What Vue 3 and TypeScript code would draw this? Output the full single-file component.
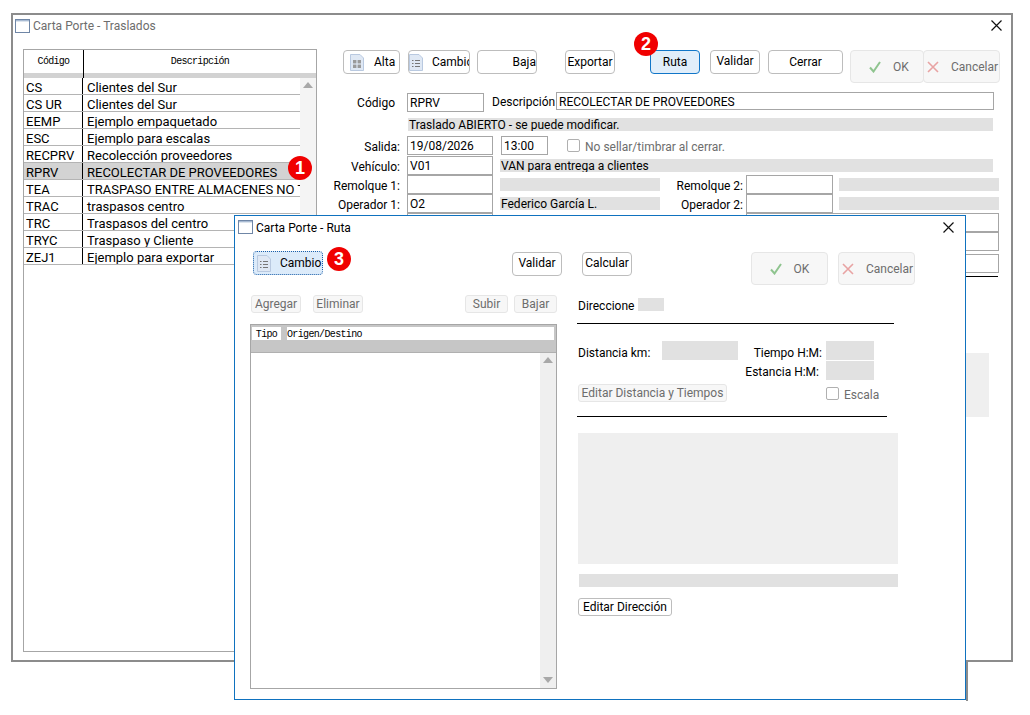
<script setup lang="ts">
interface Row { code: string; desc: string; selected?: boolean }
const rows: Row[] = [
  { code: 'CS', desc: 'Clientes del Sur' },
  { code: 'CS UR', desc: 'Clientes del Sur' },
  { code: 'EEMP', desc: 'Ejemplo empaquetado' },
  { code: 'ESC', desc: 'Ejemplo para escalas' },
  { code: 'RECPRV', desc: 'Recolección proveedores' },
  { code: 'RPRV', desc: 'RECOLECTAR DE PROVEEDORES', selected: true },
  { code: 'TEA', desc: 'TRASPASO ENTRE ALMACENES NO T' },
  { code: 'TRAC', desc: 'traspasos centro' },
  { code: 'TRC', desc: 'Traspasos del centro' },
  { code: 'TRYC', desc: 'Traspaso y Cliente' },
  { code: 'ZEJ1', desc: 'Ejemplo para exportar' },
]
</script>

<template>
  <div class="desk">
    <section class="win main">
      <header class="title inactive">
        <svg class="winicon" width="15" height="14" viewBox="0 0 15 14"><rect x="0.5" y="0.5" width="14" height="13" fill="#fff" stroke="#6f86a6" /><rect x="1" y="1" width="13" height="1.4" fill="#a9bbd3" /></svg>
        <span>Carta Porte - Traslados</span>
        <svg class="close" width="11" height="11" viewBox="0 0 11 11"><path d="M0.5 0.5 10.5 10.5M10.5 0.5 0.5 10.5" stroke="#111" stroke-width="1.2" fill="none" /></svg>
      </header>
      <div class="main-body">
        <div class="list">
          <div class="list-head">
            <div class="h1">Código</div>
            <div class="h2">Descripción</div>
          </div>
          <div class="list-band"><i></i></div>
          <div class="list-rows">
            <div class="rows-col">
              <div v-for="r in rows" :key="r.code" class="lrow" :class="{ sel: r.selected }">
                <span class="c1">{{ r.code }}</span>
                <span class="c2">{{ r.desc }}</span>
              </div>
            </div>
            <div class="vscroll soft"><b class="up"></b></div>
          </div>
        </div>

        <div class="pane">
          <div class="tb">
            <button class="btn b-alta">
              <svg class="doc" width="14" height="17" viewBox="0 0 14 17"><path d="M0.5 0.5H10L13.5 4V16.5H0.5Z" fill="#dfe8f4" stroke="#b9c9e0" /><rect x="3" y="6" width="3.4" height="3.4" fill="#9a9a9a" /><rect x="7.6" y="6" width="3.4" height="3.4" fill="#9a9a9a" /><rect x="3" y="10.6" width="3.4" height="3.4" fill="#9a9a9a" /><rect x="7.6" y="10.6" width="3.4" height="3.4" fill="#9a9a9a" /></svg>
              <span class="tx">Alta</span>
            </button>
            <button class="btn b-cambio">
              <svg class="doc" width="14" height="17" viewBox="0 0 14 17"><path d="M0.5 0.5H10L13.5 4V16.5H0.5Z" fill="#dfe8f4" stroke="#b9c9e0" /><path d="M3 6.5H4.5M6 6.5H11M3 9.5H4.5M6 9.5H11M3 12.5H4.5M6 12.5H11" stroke="#777" /></svg>
              <span class="tx">Cambio</span>
            </button>
            <button class="btn b-baja"><span class="tx">Baja</span></button>
            <button class="btn b-exp">Exportar</button>
            <button class="btn b-ruta">Ruta</button>
            <button class="btn b-val">Validar</button>
            <button class="btn b-cerrar">Cerrar</button>
            <button class="btn off big b-ok">
              <svg width="12" height="12" viewBox="0 0 12 12"><path d="M1 6.5 4.5 10.5 11 1" stroke="#8fc48f" stroke-width="2" fill="none" /></svg>
              <span>OK</span>
            </button>
            <button class="btn off big b-can">
              <svg width="12" height="12" viewBox="0 0 12 12"><path d="M1 1 11 11M11 1 1 11" stroke="#e8a3a3" stroke-width="1.6" fill="none" /></svg>
              <span>Cancelar</span>
            </button>
          </div>

          <div class="frow r-codigo">
            <label class="lab l-cod">Código</label>
            <div class="inp i-cod">RPRV</div>
            <label class="l-desc">Descripción</label>
            <div class="inp i-desc">RECOLECTAR DE PROVEEDORES</div>
          </div>
          <div class="frow r-status"><div class="ro status">Traslado ABIERTO - se puede modificar.</div></div>
          <div class="frow r-salida">
            <label class="lab">Salida:</label>
            <div class="inp i-std">19/08/2026</div>
            <div class="inp i-time">13:00</div>
            <span class="chk c-sellar"></span>
            <span class="dim">No sellar/timbrar al cerrar.</span>
          </div>
          <div class="frow stack">
            <label class="lab">Vehículo:</label>
            <div class="inp i-std">V01</div>
            <div class="ro ro-veh">VAN para entrega a clientes</div>
          </div>
          <div class="frow stack">
            <label class="lab">Remolque 1:</label>
            <div class="inp i-std"></div>
            <div class="ro ro-half"></div>
            <label class="lab2">Remolque 2:</label>
            <div class="inp i-std i-r"></div>
            <div class="ro ro-r"></div>
          </div>
          <div class="frow stack">
            <label class="lab">Operador 1:</label>
            <div class="inp i-std">O2</div>
            <div class="ro ro-half">Federico García L.</div>
            <label class="lab2">Operador 2:</label>
            <div class="inp i-std i-r"></div>
            <div class="ro ro-r"></div>
          </div>
          <div class="frow stack">
            <span class="lab"></span>
            <div class="inp i-std"></div>
            <div class="inp i-long"></div>
          </div>
          <div class="frow stack"><div class="inp i-wide"></div></div>
          <div class="frow stack r-last"><div class="inp i-wide"></div></div>
          <div class="pane-line"></div>
          <div class="pane-block"></div>
        </div>
      </div>
    </section>

    <span class="badge b1">1</span>
    <span class="badge b2">2</span>

    <div class="corner-shadow"></div>

    <section class="win modal">
      <header class="title">
        <svg class="winicon" width="15" height="14" viewBox="0 0 15 14"><rect x="0.5" y="0.5" width="14" height="13" fill="#fff" stroke="#6f86a6" /><rect x="1" y="1" width="13" height="1.4" fill="#a9bbd3" /></svg>
        <span class="m-title">Carta Porte - Ruta</span>
        <svg class="close" width="11" height="11" viewBox="0 0 11 11"><path d="M0.5 0.5 10.5 10.5M10.5 0.5 0.5 10.5" stroke="#111" stroke-width="1.2" fill="none" /></svg>
      </header>
      <div class="m-tb">
        <button class="btn m-cambio">
          <svg class="doc" width="14" height="17" viewBox="0 0 14 17"><path d="M0.5 0.5H10L13.5 4V16.5H0.5Z" fill="#dfe8f4" stroke="#b9c9e0" /><path d="M3 6.5H4.5M6 6.5H11M3 9.5H4.5M6 9.5H11M3 12.5H4.5M6 12.5H11" stroke="#777" /></svg>
          <span class="tx">Cambio</span>
        </button>
        <button class="btn m-val">Validar</button>
        <button class="btn m-calc">Calcular</button>
        <button class="btn off big m-ok">
          <svg width="12" height="12" viewBox="0 0 12 12"><path d="M1 6.5 4.5 10.5 11 1" stroke="#8fc48f" stroke-width="2" fill="none" /></svg>
          <span>OK</span>
        </button>
        <button class="btn off big m-can">
          <svg width="12" height="12" viewBox="0 0 12 12"><path d="M1 1 11 11M11 1 1 11" stroke="#e8a3a3" stroke-width="1.6" fill="none" /></svg>
          <span>Cancelar</span>
        </button>
      </div>
      <div class="m-body">
        <div class="m-left">
          <div class="m-acts">
            <button class="btn off sm a-add">Agregar</button>
            <button class="btn off sm a-del">Eliminar</button>
            <button class="btn off sm a-up">Subir</button>
            <button class="btn off sm a-down">Bajar</button>
          </div>
          <div class="m-grid">
            <div class="g-head">
              <div class="g-h1">Tipo</div>
              <div class="g-h2">Origen/Destino</div>
            </div>
            <div class="g-band"></div>
            <div class="g-rows">
              <div class="vscroll"><b class="up"></b><b class="down"></b></div>
            </div>
          </div>
        </div>
        <div class="m-right">
          <div class="d-row">
            <span class="d-lab">Direccione</span>
            <div class="ro d-val"></div>
          </div>
          <div class="rule r1"></div>
          <div class="t-row t1">
            <span class="t-lab">Distancia km:</span>
            <div class="ro t-km"></div>
            <span class="t-tlab">Tiempo H:M:</span>
            <div class="ro t-hm"></div>
          </div>
          <div class="t-row t2">
            <span class="t-elab">Estancia H:M:</span>
            <div class="ro t-hm t-hm2"></div>
          </div>
          <div class="e-row">
            <button class="btn off sm e-btn">Editar Distancia y Tiempos</button>
            <span class="chk c-esc"></span>
            <span class="dim">Escala</span>
          </div>
          <div class="rule r2"></div>
          <div class="map"></div>
          <div class="ro addr"></div>
          <button class="btn sm e-dir">Editar Dirección</button>
        </div>
      </div>
    </section>

    <span class="badge b3">3</span>
  </div>
</template>

<style>
html, body { margin: 0; background: #fff; }
</style>

<style scoped>
.desk {
  position: relative;
  width: 1030px;
  height: 715px;
  overflow: hidden;
  background: #fff;
  color: #000;
  font-family: Roboto, "Noto Sans", sans-serif;
  font-size: 12px;
  line-height: 16px;
}
button { font: inherit; color: inherit; padding: 0; }
svg { flex: none; }
.win { position: absolute; box-sizing: border-box; background: #fff; display: flex; flex-direction: column; }
.main { left: 11px; top: 13px; width: 1002px; height: 649px; border: 2px solid #8c8c8c; }
.modal { left: 234px; top: 215px; width: 732px; height: 485px; border: 1px solid #0f72bf; }
.corner-shadow { position: absolute; left: 966px; top: 661px; width: 2px; height: 40px; background: #8c8c8c; }

.title { height: 22px; flex: none; display: flex; align-items: center; padding-left: 3px; position: relative; }
.main .title { padding-left: 2px; }
.title.inactive { color: #6d6d6d; }
.winicon { margin-right: 3px; }
.m-title { padding-top: 2px; }
.close { position: absolute; top: 5px; }
.main .close { right: 9px; }
.modal .close { right: 11px; top: 6px; }

.main-body { display: flex; flex: 1; min-height: 0; padding: 12px 0 0 10px; }

/* list */
.list { width: 294px; height: 603px; box-sizing: border-box; border: 1px solid #a6a6a6; flex: none; display: flex; flex-direction: column; }
.list-head { height: 23px; display: flex; font: 10px/23px "Liberation Mono", "DejaVu Sans Mono", monospace; letter-spacing: -0.7px; text-align: center; background: #fff; }
.h1 { width: 59px; border-right: 1px solid #000; }
.h2 { flex: 1; }
.list-band { height: 5px; background: #d2d2d2; }
.list-band i { display: block; width: 59px; height: 5px; border-right: 1px solid #000; }
.list-rows { flex: 1; display: flex; min-height: 0; }
.rows-col { flex: 1; min-width: 0; }
.lrow { height: 17px; box-sizing: border-box; display: flex; border-bottom: 1px solid #b4b4b4; font-size: 13px; line-height: 19px; white-space: nowrap; }
.lrow.sel { background: #d3d3d3; }
.c1 { width: 59px; flex: none; box-sizing: border-box; padding-left: 2px; border-right: 1px solid #000; }
.c2 { flex: 1; min-width: 0; overflow: hidden; padding-left: 4px; }
.vscroll { width: 16px; flex: none; background: #efefef; position: relative; }
.vscroll.soft { background: #f4f4f4; }
.up, .down { position: absolute; left: 3px; width: 0; height: 0; border-left: 5px solid transparent; border-right: 5px solid transparent; }
.up { top: 4px; border-bottom: 6px solid #a8a8a8; }
.down { bottom: 5px; border-top: 6px solid #a8a8a8; }

/* right pane */
.pane { margin-left: 12px; width: 672px; display: flex; flex-direction: column; flex: none; }
.tb { display: flex; align-items: flex-start; margin: 1px 0 0 14px; height: 33px; flex: none; }
.btn { box-sizing: border-box; height: 24px; background: #fff; border: 1px solid #bdbdbd; border-radius: 4px; flex: none; display: flex; align-items: center; justify-content: center; white-space: nowrap; overflow: hidden; }
.btn.off { background: #f7f7f7; border-color: #e6e6e6; color: #6d6d6d; }
.btn.big { height: 33px; }
.btn.sm { height: 18px; border-radius: 3px; }
.b-alta { width: 57px; padding-left: 6px; justify-content: flex-start; }
.b-alta .tx { margin-left: 10px; }
.b-cambio { width: 62px; margin-left: 8px; justify-content: flex-start; }
.b-cambio .tx { margin-left: 9px; }
.b-baja { width: 60px; margin-left: 7px; justify-content: flex-end; }
.b-exp { width: 50px; margin-left: 28px; }
.b-ruta { width: 50px; margin-left: 35px; background: #e1eefa; border-color: #1176c8; }
.b-val { width: 50px; margin-left: 10px; padding-bottom: 2px; }
.b-cerrar { width: 75px; margin-left: 8px; }
.b-ok { width: 74px; margin-left: 7px; gap: 12px; padding-left: 4px; border-right-color: transparent; }
.b-can { width: 77px; margin-left: -1px; gap: 12px; justify-content: flex-start; padding-left: 3px; }

.frow { display: flex; align-items: flex-start; flex: none; }
.lab { width: 71px; text-align: right; flex: none; margin-right: 7px; line-height: 23px; height: 19px; }
.inp { box-sizing: border-box; height: 19px; border: 1px solid #a6a6a6; padding-left: 2px; line-height: 18px; flex: none; background: #fff; white-space: nowrap; overflow: hidden; }
.ro { background: #e1e1e1; height: 13px; line-height: 15px; padding-left: 1px; box-sizing: border-box; flex: none; white-space: nowrap; overflow: hidden; }

.r-codigo { margin-top: 9px; height: 19px; }
.l-cod { width: 66px; margin-right: 12px; margin-top: 1px; line-height: 21px; }
.i-cod { width: 77px; margin-top: 1px; }
.l-desc { margin-left: 8px; width: 64px; line-height: 20px; flex: none; }
.i-desc { width: 438px; height: 18px; }
.r-status { margin: 7px 0 0 79px; }
.status { width: 585px; }
.r-salida { margin-top: 5px; height: 19px; }
.i-std { width: 86px; }
.i-time { width: 47px; margin-left: 8px; }
.chk { box-sizing: border-box; width: 13px; height: 13px; border: 1.5px solid #b0b0b0; border-radius: 2px; background: #fff; flex: none; }
.c-sellar { margin: 3px 5px 0 19px; }
.dim { color: #6d6d6d; line-height: 22px; }
.stack { height: 19px; }
.r-salida + .stack { margin-top: 1px; }
.ro-veh { width: 493px; margin: 3px 0 0 7px; }
.ro-half { width: 160px; margin: 3px 0 0 7px; }
.lab2 { width: 83px; text-align: right; margin-right: 3px; line-height: 23px; height: 19px; flex: none; }
.i-r { width: 87px; }
.ro-r { width: 160px; margin: 3px 0 0 6px; }
.i-long { width: 253px; margin-left: 253px; }
.i-wide { width: 253px; margin-left: 417px; }
.r-last { margin-top: 3px; }
.pane-line { height: 1px; background: #000; margin: 3px 0 0 4px; width: 665px; }
.pane-block { height: 64px; width: 656px; margin: 76px 0 0 4px; background: #efefef; }

/* badges */
.badge { position: absolute; box-sizing: border-box; width: 24px; height: 24px; border-radius: 50%; background: #f00000; color: #fff; font: 700 18px/24px "Liberation Sans", Arial, sans-serif; text-align: center; }
.b1 { left: 288px; top: 156px; }
.b2 { left: 634px; top: 32px; }
.b3 { left: 327px; top: 247px; }

/* modal */
.m-tb { display: flex; align-items: flex-start; padding: 13px 0 0 18px; height: 34px; flex: none; }
.m-cambio { width: 70px; background: #dcebfa; border: 1px dotted #1b5fa8; justify-content: flex-start; padding-left: 3px; }
.m-cambio .tx { margin-left: 9px; }
.m-val { width: 50px; margin: 1px 0 0 189px; padding-bottom: 2px; }
.m-calc { width: 50px; margin: 1px 0 0 20px; padding-bottom: 2px; }
.m-ok { width: 77px; margin: 1px 0 0 119px; gap: 12px; }
.m-can { width: 77px; margin: 1px 0 0 10px; gap: 12px; justify-content: flex-start; padding-left: 3px; }

.m-body { display: flex; padding: 10px 0 0 15px; flex: 1; min-height: 0; }
.m-left { width: 307px; flex: none; }
.m-acts { display: flex; height: 18px; padding-left: 1px; }
.a-add { width: 50px; }
.a-del { width: 50px; margin-left: 12px; }
.a-up { width: 43px; margin-left: 102px; }
.a-down { width: 43px; margin-left: 6px; }
.m-grid { margin-top: 11px; height: 365px; box-sizing: border-box; border: 1px solid #a6a6a6; display: flex; flex-direction: column; }
.g-head { height: 15px; display: flex; background: #c6c6c6; padding: 2px 2px 0 1px; font: 10px/15px "Liberation Mono", "DejaVu Sans Mono", monospace; letter-spacing: -0.65px; }
.g-h1 { width: 29px; background: #fff; text-align: center; height: 13px; overflow: hidden; }
.g-h2 { flex: 1; margin-left: 6px; background: #fff; height: 13px; overflow: hidden; }
.g-band { height: 11px; background: #c6c6c6; flex: none; border-bottom: 1px solid #b0b0b0; margin-top: -1px; }
.g-rows { flex: 1; display: flex; justify-content: flex-end; }

.m-right { margin-left: 21px; width: 330px; flex: none; display: flex; flex-direction: column; align-items: flex-start; }
.d-row { display: flex; margin-top: 3px; height: 13px; }
.d-lab { width: 60px; line-height: 17px; flex: none; }
.d-val { width: 26px; }
.rule { height: 1px; background: #000; margin-left: -1px; flex: none; }
.r1 { width: 317px; margin-top: 12px; }
.r2 { width: 310px; margin-top: 14px; }
.t-row { display: flex; height: 19px; flex: none; }
.t1 { margin-top: 17px; }
.t2 { margin-top: 1px; }
.t-row .ro { height: 19px; }
.t-lab { width: 84px; line-height: 24px; flex: none; }
.t-km { width: 76px; }
.t-tlab { width: 84px; text-align: right; line-height: 24px; flex: none; }
.t-hm { width: 48px; margin-left: 4px; }
.t-elab { width: 241px; text-align: right; line-height: 23px; flex: none; }
.t-hm2 { margin-left: 7px; }
.e-row { display: flex; margin-top: 4px; height: 18px; flex: none; }
.e-btn { width: 149px; }
.c-esc { margin: 3px 5px 0 99px; }
.map { width: 320px; height: 131px; margin-top: 16px; background: #efefef; flex: none; }
.addr { width: 319px; margin: 10px 0 0 1px; }
.e-dir { width: 94px; margin-top: 11px; }
</style>
